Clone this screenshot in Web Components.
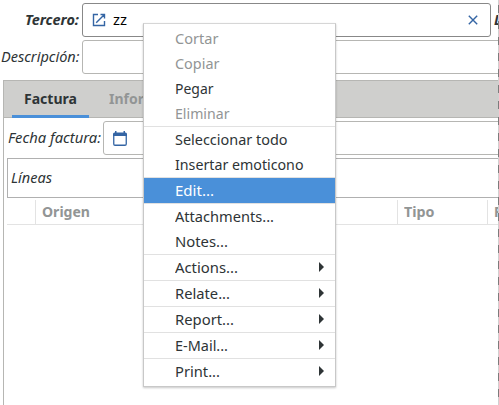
<!DOCTYPE html>
<html lang="es">
<head>
<meta charset="utf-8">
<title>Factura</title>
<style>
html,body{margin:0;width:499px;height:405px;overflow:hidden;background:#fff}
body{font:14px/20px "Noto Sans","Open Sans",sans-serif;color:#2e3436}
</style>
</head>
<body>
<invoice-form></invoice-form>
<context-menu>
<menu-item disabled w="43.5">Cortar</menu-item>
<menu-item disabled w="44.5">Copiar</menu-item>
<menu-item w="38.5">Pegar</menu-item>
<menu-item disabled w="54.5">Eliminar</menu-item>
<menu-item line w="112.5">Seleccionar todo</menu-item>
<menu-item w="128.5">Insertar emoticono</menu-item>
<menu-item line active w="39">Edit...</menu-item>
<menu-item line w="99">Attachments...</menu-item>
<menu-item w="53">Notes...</menu-item>
<menu-item line sub w="63">Actions...</menu-item>
<menu-item line sub w="55">Relate...</menu-item>
<menu-item line sub w="59">Report...</menu-item>
<menu-item line sub w="53">E-Mail...</menu-item>
<menu-item line sub w="45">Print...</menu-item>
</context-menu>
<page-edge></page-edge>
<script>
/* Text whose horizontal extent is set to an exact width */
class FitText extends HTMLElement{
  connectedCallback(){
    const r=this.attachShadow({mode:'open'});
    r.innerHTML='<style>:host{display:block;white-space:nowrap;flex:none}span{display:inline-block;transform-origin:0 50%}</style><span><slot></slot></span>';
    const s=r.querySelector('span'),w=+this.getAttribute('w');
    if(w){
      this.style.width=w+'px';
      s.style.transform='scaleX('+w/s.getBoundingClientRect().width+')';
    }
  }
}
class MenuItem extends HTMLElement{
  connectedCallback(){
    this.attachShadow({mode:'open'}).innerHTML=`<style>
:host{display:flex;align-items:center;justify-content:space-between;height:25px;padding:0 11px 0 31px;color:#2e3436}
:host([line]){border-top:1px solid #e1e1e1}
:host([disabled]){color:#929595}
:host([active]){background:#4a90d9 padding-box;color:#fff}
svg{display:none}:host([sub]) svg{display:block;margin-bottom:1px}
</style><fit-text w="${this.getAttribute('w')}">${this.textContent}</fit-text><svg width="5" height="10"><path d="M0 0L5 5L0 10Z" fill="#2e3436"/></svg>`;
  }
}
class ContextMenu extends HTMLElement{
  connectedCallback(){
    this.attachShadow({mode:'open'}).innerHTML=`<style>
:host{display:block;position:absolute;left:143px;top:23px;width:191px;padding:2px 0;background:#fff;border:1px solid #c8c8c8;border-top-color:#d6d6d6;box-shadow:0 1px 2px rgba(0,0,0,.22)}
</style><slot></slot>`;
  }
}
class PageEdge extends HTMLElement{
  connectedCallback(){
    this.attachShadow({mode:'open'}).innerHTML=`<style>
:host{display:block;position:absolute;right:0;top:0;width:1px;height:405px;background:repeating-linear-gradient(#d0d0d0 0 5px,#7c7c7c 5px 13px,#d0d0d0 13px 16px)}
</style>`;
  }
}
class TextEntry extends HTMLElement{
  connectedCallback(){
    this.attachShadow({mode:'open'}).innerHTML=`<style>
:host{display:flex;align-items:center;box-sizing:border-box;height:34px;border:1px solid #b6b6b3;border-radius:3px;background:#fff;flex:none;color:#000}
:host([strong]){border-color:#888}
</style><slot></slot>`;
  }
}
class InvoiceForm extends HTMLElement{
  connectedCallback(){
    this.attachShadow({mode:'open'}).innerHTML=`<style>
:host{display:block;width:499px;height:405px;overflow:hidden;padding-top:3px;box-sizing:border-box}
.row{display:flex;align-items:center;height:34px;margin-bottom:3px}
i,.lab{font-style:italic}
.lab{display:flex;box-sizing:border-box;justify-content:flex-end;width:82px;padding-right:3px;flex:none}
.b{font-weight:700}
.ter{width:409px}.desc{width:440px}
.open{margin:0 7px 0 9px}.clear{margin-left:auto;margin-right:12px}
.next{margin-left:3px}
.book{margin:6px 0 0 3px;border-left:1px solid #b6b6b3;height:325px;width:500px}
.tabs{display:flex;align-items:stretch;box-sizing:border-box;height:38px;margin-left:-1px;background:#cfcfcd;border:1px solid #b6b6b3;border-right:0;padding-left:8px}
.tab{display:flex;align-items:center;height:37px;box-sizing:border-box;padding:0 12px 2px;font-weight:700;color:#929595}
.tab.on{color:#2e3436;border-bottom:3px solid #4a90d9;padding-top:3px;width:77px}
.tab+.tab{padding-left:20px}
.date{margin:3px 0 0;padding-left:4px}
.date text-entry{width:420px;margin-left:2px}
.cal{margin-left:9px}
.lines{display:flex;align-items:center;box-sizing:border-box;height:40px;margin:3px 0 2px 3px;border:1px solid #b0b0b0;padding-left:3px}
.head{display:flex;box-sizing:border-box;height:25px;margin-left:3px;border-bottom:1px solid #e3e3e3;font-weight:700;color:#929595}
.head div{display:flex;box-sizing:border-box;align-items:center;border-right:1px solid #e3e3e3;padding-left:6px;flex:none}
</style>
<div class="row"><div class="lab b"><fit-text w="54">Tercero:</fit-text></div>
<text-entry class="ter" strong>
<svg class="open" width="14" height="14" fill="none" stroke="#3465a4" stroke-width="1.4"><path d="M6 1.5H1.5V12.5H12.5V8M8.5 1.5H12.5V5.5M12.2 1.8L4.2 9.8"/></svg>
<fit-text w="14">zz</fit-text>
<svg class="clear" width="10" height="10" fill="none" stroke="#3465a4" stroke-width="1.4"><path d="M.8 .8L9.2 9.2M9.2 .8L.8 9.2"/></svg>
</text-entry><div class="next b"><i>L</i></div></div>
<div class="row"><div class="lab"><fit-text w="78.5">Descripción:</fit-text></div><text-entry class="desc"></text-entry></div>
<div class="book">
<div class="tabs"><div class="tab on"><fit-text w="53">Factura</fit-text></div><div class="tab"><fit-text w="35">Infor</fit-text></div></div>
<div class="row date"><i><fit-text w="93">Fecha factura:</fit-text></i><text-entry><svg class="cal" width="14" height="15"><path d="M.75 4V13Q.75 14.25 2 14.25H12Q13.25 14.25 13.25 13V4" fill="none" stroke="#3465a4" stroke-width="1.3"/><path d="M0 3Q0 1.5 1.5 1.5H2V0H3.5V1.5H10.5V0H12V1.5H12.5Q14 1.5 14 3V5H0Z" fill="#3465a4"/></svg></text-entry></div>
<div class="lines"><i><fit-text w="41">Líneas</fit-text></i></div>
<div class="head"><div style="width:29px"></div><div style="width:362px"><fit-text w="48">Origen</fit-text></div><div style="width:90px"><fit-text w="30.5">Tipo</fit-text></div><div style="width:60px">P</div></div>
</div>`;
  }
}
customElements.define('fit-text',FitText);
customElements.define('text-entry',TextEntry);
customElements.define('menu-item',MenuItem);
customElements.define('context-menu',ContextMenu);
customElements.define('page-edge',PageEdge);
customElements.define('invoice-form',InvoiceForm);
</script>
</body>
</html>
